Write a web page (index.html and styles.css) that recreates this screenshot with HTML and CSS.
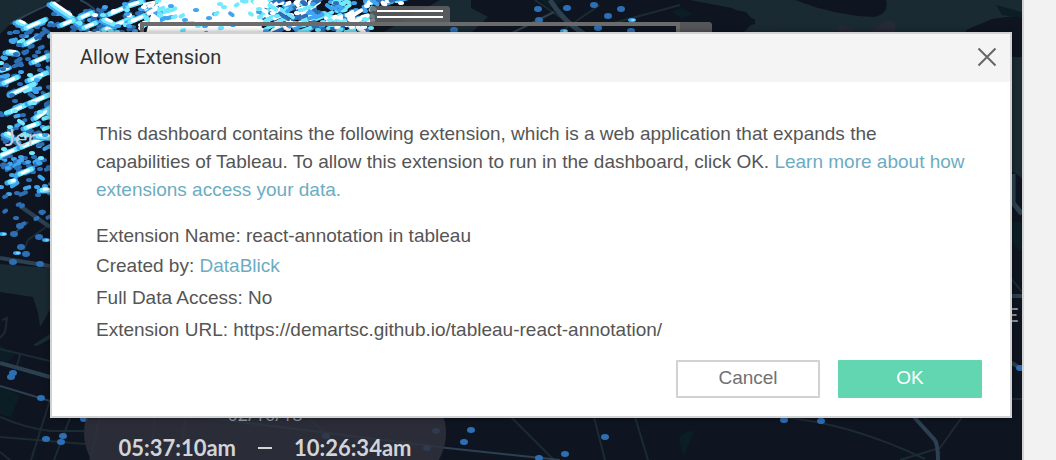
FILE: index.html
```html
<!DOCTYPE html>
<html lang="en">
<head>
<meta charset="utf-8">
<title>Allow Extension</title>
<link rel="stylesheet" href="styles.css">
</head>
<body>
<div class="workspace">
  <main class="dashboard">
    <svg class="map" width="1022" height="460" viewBox="0 0 1022 460" aria-hidden="true">
      <rect width="1022" height="460" fill="#0e1521"/>
      <path fill="#1a2a33" d="M0 0H54L30 12L8 26L0 34ZM471 0H1022V18L992 20L994 28L968 30V34H704L756 24L746 12L700 4L640 0L600 8L540 22L488 17L471 8Z"/>
      <path fill="#0e1521" d="M471 0H690L732 8L756 20L742 34H471ZM795 0Q835 16 875 17Q890 13 886 0ZM992 19L1022 15V57L1010 54L966 34V30Z"/>
      <path fill="#1a2a33" d="M1010 57H1022V178L1010 170Z"/>
      <path fill="#0b1e26" d="M996 5L1022 12V18L1002 15ZM672 12L682 8L692 14L682 18ZM540 0H565L550 8ZM1010 222H1022V252L1010 240ZM0 345L14 355L8 362L0 360ZM0 387L20 395L11 417L0 414ZM679 437L687 431L694 432L685 453H682Z"/>
      <path fill="#1a2a33" d="M0 264L50 268V310L40 327L38 312L33 297L20 295L0 292ZM33 345L50 334V339L37 346ZM380 34L440 0H471V8L488 17L470 34Z"/>
      <path fill="#262936" d="M837 28L842 25L856 32H870L887 20L895 23L896 34H840Z"/>
      <g fill="none" stroke="#1c2a33" stroke-width="2">
        <path d="M760 31L800 2M560 32L600 5M610 24L680 5M535 0L570 24M0 349L50 361M20 355L16 369M50 400L31 460M70 418L54 460M0 417Q25 428 50 431H84M0 437L85 444M0 452L10 460M100 417L90 460M155 417L150 460M186 417L178 460M307 417L345 450M511 417L554 460M594 417L605 460M635 417L648 460M780 417Q850 423 925 459M962 417L940 448L900 460M1010 399H1022M1010 277L1022 292M2 320L7 318L5 332L0 338M24 250L28 240L50 224"/>
      </g>
      <g fill="none" stroke="#2c4050">
        <path stroke-width="5" d="M550 0Q563 21 584 34M1013 174V203L1022 214"/>
        <path stroke-width="4" d="M0 363L50 377M914 417L934 439Q938 443 938 460M1010 296H1022M1010 362L1022 369M20 206L50 227M0 258L50 266"/>
        <path stroke-width="2" d="M0 386L50 401M200 417L447 448L560 460M510 34L554 12M10 24Q38 8 60 0M80 0Q95 6 100 18M28 222L12 235"/>
      </g>
      <g id="trips"></g>
      <text x="5" y="146" font-family="Lato" font-size="24" fill="#c3cdd9">Jer</text>
      <text x="1008" y="322" font-family="Lato" font-size="18" font-weight="700" fill="#8498a2">E</text>
    </svg>

    <div class="zone-frame"></div>
    <div class="toolbar-grip"><i></i></div>
    <div class="zone-actions">
      <svg width="32" height="12" viewBox="0 0 32 12" aria-hidden="true"><path d="M7 8L11 12M22 8L18 12" stroke="#ddd" stroke-width="2"/></svg>
    </div>

    <section class="time-range">
      <span class="date">02/10/18</span>
      <div class="times"><span>05:37:10am</span><i></i><span>10:26:34am</span></div>
    </section>
  </main>
  <aside class="gutter"></aside>

  <div class="overlay">
    <section class="dialog" role="dialog" aria-labelledby="dialog-title">
      <header class="dialog-header">
        <h1 id="dialog-title">Allow Extension</h1>
        <button class="close" type="button" aria-label="Close">
          <svg width="20" height="20" viewBox="0 0 20 20" aria-hidden="true"><path d="M1.500 1.500L18.500 18.500M18.500 1.500L1.500 18.500"/></svg>
        </button>
      </header>
      <div class="dialog-body">
        <p class="intro">This dashboard contains the following extension, which is a web application that expands the capabilities of Tableau. To allow this extension to run in the dashboard, click OK. <a href="#">Learn more about how extensions access your data.</a></p>
        <div class="details">
          <p class="name">Extension Name: react-annotation in tableau</p>
          <p>Created by: <a href="#">DataBlick</a></p>
          <p>Full Data Access: No</p>
          <p>Extension URL: https://demartsc.github.io/tableau-react-annotation/</p>
        </div>
      </div>
      <footer class="dialog-footer">
        <button class="button" type="button">Cancel</button>
        <button class="button primary" type="button">OK</button>
      </footer>
    </section>
  </div>
</div>
<script src="trips.js"></script>
</body>
</html>
```
FILE: styles.css
```css
* { box-sizing: border-box; }

body {
  margin: 0;
  font-family: "Liberation Sans", Arial, sans-serif;
  font-size: 19px;
  color: #555;
}

.workspace {
  position: relative;
  display: flex;
  min-height: 100vh;
  overflow: hidden;
}

.dashboard {
  position: relative;
  flex: 1;
  overflow: hidden;
  background: #0e1521;
}

.map { position: absolute; top: 0; left: 0; }

.gutter {
  width: 34px;
  background: #f2f2f2;
  border-left: 2px solid #d2d2d2;
}

.toolbar-grip {
  position: absolute;
  top: 6px;
  left: 370px;
  width: 80px;
  height: 16px;
  padding: 4px 7px;
  background: rgba(102, 102, 102, .8);
  border-radius: 3px 3px 0 0;
}

.toolbar-grip i {
  display: block;
  height: 8px;
  border: solid #fff;
  border-width: 2px 0;
}

.zone-frame {
  position: absolute;
  top: 22px;
  left: 140px;
  width: 540px;
  height: 100px;
  border: 4px solid #6b6b6b;
}

.zone-actions {
  position: absolute;
  top: 22px;
  left: 680px;
  width: 32px;
  height: 60px;
  background: #55565a;
  border-radius: 0 3px 0 0;
}

.time-range {
  position: absolute;
  top: 380px;
  left: 84px;
  width: 362px;
  height: 106px;
  padding-top: 24px;
  border-radius: 53px;
  background: rgba(47, 49, 60, .85);
  color: #d3d4d8;
  text-align: center;
}

.date {
  display: block;
  font-family: "Open Sans", sans-serif;
  font-size: 18px;
  line-height: 20px;
  color: #9a9ca6;
}

.times {
  display: flex;
  justify-content: center;
  align-items: center;
  gap: 22px;
  font-family: Lato, sans-serif;
  font-size: 22px;
  line-height: 48px;
  font-weight: 700;
}

.times i { width: 14px; height: 2px; background: #d3d4d8; }

.overlay {
  position: absolute;
  inset: 0;
  padding: 32px 44px 0 50px;
}

.dialog {
  background: #fff;
  border: 2px solid #d2d2d2;
  box-shadow: 0 0 6px rgba(0, 0, 0, .4);
}

.dialog-header {
  display: flex;
  align-items: center;
  justify-content: space-between;
  height: 48px;
  padding: 0 13px 2px 28px;
  background: #f4f4f4;
}

.dialog-header h1 {
  margin: 0;
  font-family: Roboto, sans-serif;
  font-size: 20px;
  font-weight: 400;
  color: #333;
}

.close {
  display: flex;
  padding: 0;
  border: 0;
  background: none;
}

.close path { stroke: #666; stroke-width: 2; fill: none; }

.dialog-body { padding: 38px 36px 0 44px; }

p { margin: 0; }

a { color: #6cacc2; text-decoration: none; }

.intro { line-height: 28px; }

.details { padding-top: 18px; line-height: 32px; }

.name { line-height: 28px; }

.dialog-footer {
  display: flex;
  justify-content: flex-end;
  gap: 18px;
  padding: 14px 28px 18px;
}

.button {
  width: 144px;
  height: 38px;
  padding: 0 0 2px;
  border: 2px solid #d2d2d2;
  border-radius: 1px;
  background: #fff;
  color: #717171;
  font: inherit;
}

.primary {
  border-color: #62d6b0;
  background: #62d6b0;
  color: #fff;
}
```
FILE: trips.js
```js
const layer = document.getElementById("trips");
let seed = 41;
const random = () => {
  seed = (seed * 16807) % 2147483647;
  return seed / 2147483647;
};

function dot(x, y, color, rx = 4, ry = 3) {
  return `<ellipse cx="${Math.round(x)}" cy="${Math.round(y)}" rx="${rx}" ry="${ry}" fill="${color}"/>`;
}

function trail(x, y, length, angle, color, width) {
  const dx = Math.cos(angle) * length;
  const dy = Math.sin(angle) * length;
  return `<path d="M${x.toFixed(1)} ${y.toFixed(1)}l${dx.toFixed(1)} ${dy.toFixed(1)}" stroke="${color}" stroke-width="${width}" stroke-linecap="round"/>`;
}

function scatter(count, x0, y0, x1, y1, colors, maxLength) {
  let out = "";
  for (let i = 0; i < count; i++) {
    const x = x0 + random() * (x1 - x0);
    const y = y0 + random() * (y1 - y0);
    // the coastline keeps the north-west corner empty
    if (y < 34 - x * 0.6) continue;
    const color = colors[Math.floor(random() * colors.length)];
    const angle = random() < 0.8 ? -0.42 + (random() - 0.5) * 0.4 : 0.6;
    out += random() < 0.5
      ? dot(x, y, color, 3, 2)
      : trail(x, y, 2 + random() * maxLength, angle, color, 4);
  }
  return out;
}

// a bright trip: sky halo, cyan body, white core
function streak(x, y, length, angle) {
  return trail(x - 3, y + 1, length + 5, angle, sky, 5)
    + trail(x, y, length, angle, cyan, 5)
    + trail(x + 2, y - 1, length * 0.6, angle, white, 3);
}

const blue = "#2d6fb5", sky = "#3fa5f0", cyan = "#70eaff", white = "#ffffff";
let svg = "";
svg += scatter(135, 0, 22, 54, 172, [blue, blue, sky], 6);
svg += scatter(30, 0, 160, 52, 195, [blue, sky], 5);
svg += scatter(12, 0, 195, 50, 225, [blue], 1);
svg += scatter(55, 50, 2, 160, 34, [blue, blue, sky], 6);

[
  [18, 22, 8, 0.4], [26, 28, 20, -0.4], [26, 44, 12, -0.5], [2, 70, 6, -0.3], [4, 83, 14, -0.4],
  [12, 94, 24, -0.42], [30, 80, 18, -0.4], [10, 112, 16, -0.42], [30, 103, 20, -0.4], [36, 118, 16, -0.6],
  [0, 156, 20, -0.4], [22, 147, 26, -0.4], [38, 136, 14, 0.1], [20, 174, 12, -0.4], [10, 182, 4, -0.3],
  [42, 190, 6, 0], [34, 62, 16, -0.4], [26, 128, 12, -0.35], [8, 52, 8, 0.1], [6, 134, 6, 0.4],
  [52, 4, 34, 0.6], [80, 18, 12, -0.4], [62, 25, 12, -0.4], [84, 28, 12, -0.4], [110, 14, 18, -0.4],
  [104, 30, 30, -0.4], [128, 6, 14, -0.3], [104, 20, 10, 0.4], [130, 22, 18, -0.4]
].forEach(([x, y, length, angle]) => { svg += streak(x, y, length, angle); });

svg += scatter(40, 0, 36, 54, 168, [sky, cyan, cyan, blue], 6);
svg += scatter(26, 90, 0, 160, 34, [sky, cyan, white], 8);
svg += `<path fill="${white}" d="M158 -2H284L276 8L284 14L262 26L258 34H146L150 18Z"/>`;
svg += scatter(55, 140, 0, 170, 34, [sky, cyan, white, white], 6);
svg += scatter(34, 160, 0, 280, 34, [cyan, cyan, sky], 1);
svg += scatter(120, 256, 0, 312, 34, [cyan, white, white, sky, blue], 12);
svg += scatter(110, 300, 0, 368, 34, [blue, blue, sky, sky, cyan, cyan], 7);
svg += scatter(34, 325, 14, 368, 28, [white, white, cyan], 9);
svg += scatter(24, 365, 0, 410, 4, [blue, sky, cyan, white], 6);
svg += scatter(6, 366, 6, 372, 28, [cyan, white], 2);

[
  [538, 9], [567, 8], [594, 5], [621, 9], [608, 16], [539, 20], [598, 28], [454, 30], [631, 31],
  [20, 226], [14, 234], [21, 247], [26, 254], [13, 262], [40, 264], [39, 237],
  [13, 373], [11, 377], [41, 398], [46, 439], [63, 436], [61, 442], [84, 419],
  [471, 430], [464, 442], [436, 431], [427, 448], [326, 436], [784, 420], [821, 421],
  [605, 437], [565, 454], [539, 458], [1020, 368]
].forEach(([x, y]) => { svg += dot(x, y, blue); });

[[3, 234], [17, 253], [46, 240], [632, 20], [564, 31]].forEach(([x, y]) => {
  svg += dot(x, y, sky, 4, 2) + dot(x + 1, y, cyan, 2, 1);
});
layer.innerHTML = svg;
```
